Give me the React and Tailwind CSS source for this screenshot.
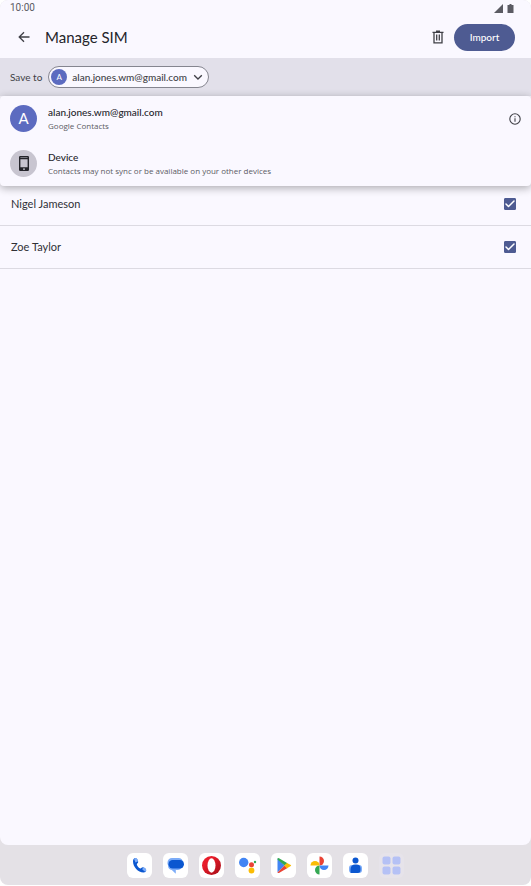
import React, { useState } from "react";
import { Check } from "lucide-react";

const account = "alan.jones.wm@gmail.com";

function StatusBar() {
  return (
    <div className="flex h-4 items-center justify-between pl-[10px] pr-[17px] text-[#5b5b63]">
      <span className="font-['Roboto'] text-[10px] leading-4">10:00</span>
      <div className="flex items-center gap-1">
        <svg className="h-[9px] w-[9px]" viewBox="0 0 9 9" fill="currentColor" aria-hidden="true">
          <path d="M9 0v9H0z" />
        </svg>
        <svg className="h-[9px] w-[7px]" viewBox="0 0 7 9" fill="currentColor" aria-hidden="true">
          <path d="M2.500 0h2v1h2v8H.5V1h2z" />
        </svg>
      </div>
    </div>
  );
}

function Header() {
  return (
    <header className="flex h-[42px] items-center pl-[17px] pr-4">
      <button type="button" aria-label="Back" className="text-[#3f3f46]">
        <svg className="h-[14px] w-[14px]" viewBox="0 0 14 14" fill="none" stroke="currentColor" strokeWidth="1.3">
          <path d="M12.5 7H2.4M7 2.2 2.2 7 7 11.8" />
        </svg>
      </button>
      <h1 className="ml-[14px] flex-1 text-[15px] leading-5 text-[#24242a]">Manage SIM</h1>
      <button type="button" aria-label="Delete" className="mr-[10px] text-[#3f3f46]">
        <svg className="h-[14px] w-3" viewBox="0 0 12 14" fill="none" stroke="currentColor" strokeWidth="1.3">
          <path d="M.5 2.3h11M4 1.2h4M2 2.3v10.500h8V2.300M4.700 4.500v6M7.300 4.500v6" />
        </svg>
      </button>
      <button type="button" className="h-[27px] w-[61px] rounded-full bg-[#4e5b92] text-[10px] font-medium text-white">
        Import
      </button>
    </header>
  );
}

function AccountMenu() {
  return (
    <div className="absolute inset-x-0 top-full z-10 rounded bg-[#faf8ff] shadow-[0_2px_8px_0px_rgba(0,0,0,0.32)]">
      <div className="flex h-[45px] items-center pl-[10px] pr-[10px]">
        <button type="button" className="flex flex-1 items-center text-left">
          <span className="flex h-[27px] w-[27px] items-center justify-center rounded-full bg-[#5c6bc0] text-[15px] text-white">A</span>
          <span className="ml-[11px]">
            <span className="block text-[10px] leading-[13px] font-medium text-[#24242a]">{account}</span>
            <span className="block font-['Open_Sans'] text-[8px] leading-[13px] text-[#5b5b63]">Google Contacts</span>
          </span>
        </button>
        <button type="button" aria-label="Account info" className="text-[#3f3f46]">
          <svg className="h-3 w-3" viewBox="0 0 12 12" fill="none" stroke="currentColor" strokeWidth="1.1">
            <circle cx="6" cy="6" r="5.2" />
            <path d="M6 5.3v3.4M6 3.2v1.1" />
          </svg>
        </button>
      </div>
      <button type="button" className="flex h-[45px] w-full items-center pl-[10px] text-left">
        <span className="flex h-[27px] w-[27px] items-center justify-center rounded-full bg-[#c8c5d0] text-[#24242a]">
          <svg className="h-[15px] w-[10px]" viewBox="0 0 10 15" aria-hidden="true">
            <path
              fill="currentColor"
              fillRule="evenodd"
              d="M1.2 0h7.6Q10 0 10 1.2v12.6Q10 15 8.8 15H1.2Q0 15 0 13.8V1.2Q0 0 1.2 0ZM1.4 3.2v8h7.200v-8Z"
            />
            <path fill="#c8c5d0" d="M4 12.6h2v1.1H4zM1.4 1.5h7.200v.6H1.400z" />
          </svg>
        </span>
        <span className="ml-[11px]">
          <span className="block text-[10px] leading-[13px] font-medium text-[#24242a]">Device</span>
          <span className="block font-['Open_Sans'] text-[8px] leading-[13px] text-[#5b5b63]">
            Contacts may not sync or be available on your other devices
          </span>
        </span>
      </button>
    </div>
  );
}

function SaveTo() {
  return (
    <div className="relative flex h-[38px] items-center bg-[#e2e0ea] pl-[10px]">
      <span className="text-[10px] text-[#3f3f46]">Save to</span>
      <button
        type="button"
        aria-expanded="true"
        className="ml-[6px] flex h-[22px] items-center rounded-full border border-[#85858f] bg-[#faf8ff] pl-[2px] pr-[5px] text-[#3f3f46]"
      >
        <span className="flex h-4 w-4 items-center justify-center rounded-full bg-[#5c6bc0] text-[8px] text-white">A</span>
        <span className="ml-[5px] mr-[6px] text-[10px] font-medium">{account}</span>
        <svg className="h-[10px] w-[10px]" viewBox="0 0 10 10" fill="none" stroke="currentColor" strokeWidth="1.3" aria-hidden="true">
          <path d="m1.200 3.200 3.800 3.800 3.800-3.800" />
        </svg>
      </button>
      <AccountMenu />
    </div>
  );
}

function ContactRow({ name }) {
  const [checked, setChecked] = useState(true);

  return (
    <li className="h-[43px] border-b border-[#dcdae2]">
      <label className="flex h-full items-center justify-between pl-[11px] pr-[15px] text-[11px] text-[#303036]">
        {name}
        <span className="grid place-items-center">
          <input
            type="checkbox"
            checked={checked}
            onChange={() => setChecked(!checked)}
            className="col-start-1 row-start-1 h-3 w-3 appearance-none rounded-[1px] border border-[#4e5b92] checked:bg-[#4e5b92]"
          />
          {checked && <Check className="pointer-events-none col-start-1 row-start-1 h-3 w-3 text-white" strokeWidth={3} />}
        </span>
      </label>
    </li>
  );
}

const apps = [
  {
    name: "Phone",
    icon: (
      <>
        <path
          fill="#0b57d0"
          d="M8.500 5C6.800 5 6 6.300 6 8.200 6 14 11 19.500 16.500 19.500c1.700 0 2.700-.8 2.700-2.500 0-1.300-2.200-2.800-3.400-2.800-1 0-1.600 1.300-2.400 1.200-1.500-.4-3.200-2.500-3.600-4 0-.8 1.400-1.300 1.400-2.400C11.200 7.500 10 5 8.500 5Z"
        />
        <path fill="#7cacf8" d="M8.500 5c1.300 0 2.300 1.800 2.600 3.200L8.500 9.500 7 5.700ZM16 14.200c1.200 0 3.200 1.500 3.200 2.800 0 .8-.2 1.400-.7 1.900l-3.200-2.400Z" />
      </>
    ),
  },
  {
    name: "Messages",
    icon: (
      <>
        <path fill="#7cacf8" d="M9 5h6.500a4.500 4.500 0 0 1 4.500 4.500v2H4.500v-2A4.500 4.500 0 0 1 9 5Z" />
        <path fill="#7cacf8" d="M5 10h14v2.500a4.500 4.500 0 0 1-4.500 4.500h-1.700v3.800L8.800 17A4.500 4.500 0 0 1 5 12.500Z" />
        <rect x="5.500" y="7" width="15.500" height="8.500" rx="4.200" fill="#0b57d0" />
      </>
    ),
  },
  {
    name: "Opera",
    icon: (
      <>
        <linearGradient id="opera-ring" x1="0" y1="0" x2="1" y2="1">
          <stop offset="0.3" stopColor="#e81c2a" />
          <stop offset="1" stopColor="#a30d17" />
        </linearGradient>
        <circle cx="12.500" cy="12.500" r="9.500" fill="url(#opera-ring)" />
        <ellipse cx="12.500" cy="12.500" rx="4" ry="7.200" fill="white" />
      </>
    ),
  },
  {
    name: "Assistant",
    icon: (
      <>
        <circle cx="8.700" cy="9.500" r="4.700" fill="#4285f4" />
        <circle cx="16.500" cy="11.700" r="2.500" fill="#ea4335" />
        <circle cx="16.500" cy="17.500" r="2.900" fill="#fbbc04" />
        <circle cx="20" cy="9" r="1.200" fill="#34a853" />
      </>
    ),
  },
  {
    name: "Play Store",
    icon: (
      <>
        <path fill="#4285f4" d="M6.500 5.500v14l7-7Z" />
        <path fill="#34a853" d="M6.500 5.500q.5-.8 1.500-.3l8.500 5-3 2.300-7-6Z" />
        <path fill="#ea4335" d="m6.500 19.500 7-7 3 2.500L8 19.900q-1 .4-1.500-.4Z" />
        <path fill="#fbbc04" d="m16 9.900 3.800 2q.8.600 0 1.200L16 15.300l-2.800-2.800Z" />
      </>
    ),
  },
  {
    name: "Photos",
    icon: (
      <>
        <path fill="#ea4335" d="M12.500 3.500a4.500 4.500 0 0 1 0 9Z" />
        <path fill="#4285f4" d="M21.500 12.500a4.500 4.500 0 0 1-9 0Z" />
        <path fill="#34a853" d="M12.500 21.500a4.500 4.500 0 0 1 0-9Z" />
        <path fill="#fbbc04" d="M3.500 12.500a4.500 4.500 0 0 1 9 0Z" />
      </>
    ),
  },
  {
    name: "Contacts",
    icon: (
      <>
        <circle cx="12.500" cy="7.500" r="3" fill="#0b57d0" />
        <rect x="6" y="12" width="13" height="8" rx="3" fill="#7cacf8" />
        <path fill="#0b57d0" d="M7.500 19.500v-3.500a4.500 4.500 0 0 1 4.500-4.500h1.500a4 4 0 0 1 4 4V17a3 3 0 0 1-3 3h-6q-1 0-1-.5Z" />
      </>
    ),
  },
];

function Dock() {
  return (
    <nav className="mb-px flex h-10 items-center justify-center gap-[11px] rounded-b-lg bg-[#e4e1e6]">
      {apps.map((app) => (
        <button key={app.name} type="button" aria-label={app.name} className="h-[25px] w-[25px] rounded-md bg-white">
          <svg className="h-full w-full" viewBox="0 0 25 25">{app.icon}</svg>
        </button>
      ))}
      <button type="button" aria-label="All apps" className="h-[25px] w-[25px] rounded-md bg-[#e6e3ea]">
        <svg className="h-full w-full" viewBox="0 0 25 25" fill="#b5c1f5">
          <rect x="3.500" y="3.500" width="8" height="8" rx="2" />
          <rect x="13.500" y="3.500" width="8" height="8" rx="2" />
          <rect x="3.500" y="13.500" width="8" height="8" rx="2" />
          <rect x="13.500" y="13.500" width="8" height="8" rx="2" />
        </svg>
      </button>
    </nav>
  );
}

export default function App() {
  return (
    <div className="flex min-h-screen flex-col bg-white font-['Lato','Roboto',sans-serif]">
      <div className="flex flex-1 flex-col rounded-t-lg bg-[#e4e1e6]">
        <div className="flex flex-1 flex-col rounded-lg bg-[#faf8ff]">
          <StatusBar />
          <Header />
          <SaveTo />
          <ul className="pt-[87px]">
            <ContactRow name="Nigel Jameson" />
            <ContactRow name="Zoe Taylor" />
          </ul>
        </div>
      </div>
      <Dock />
    </div>
  );
}
